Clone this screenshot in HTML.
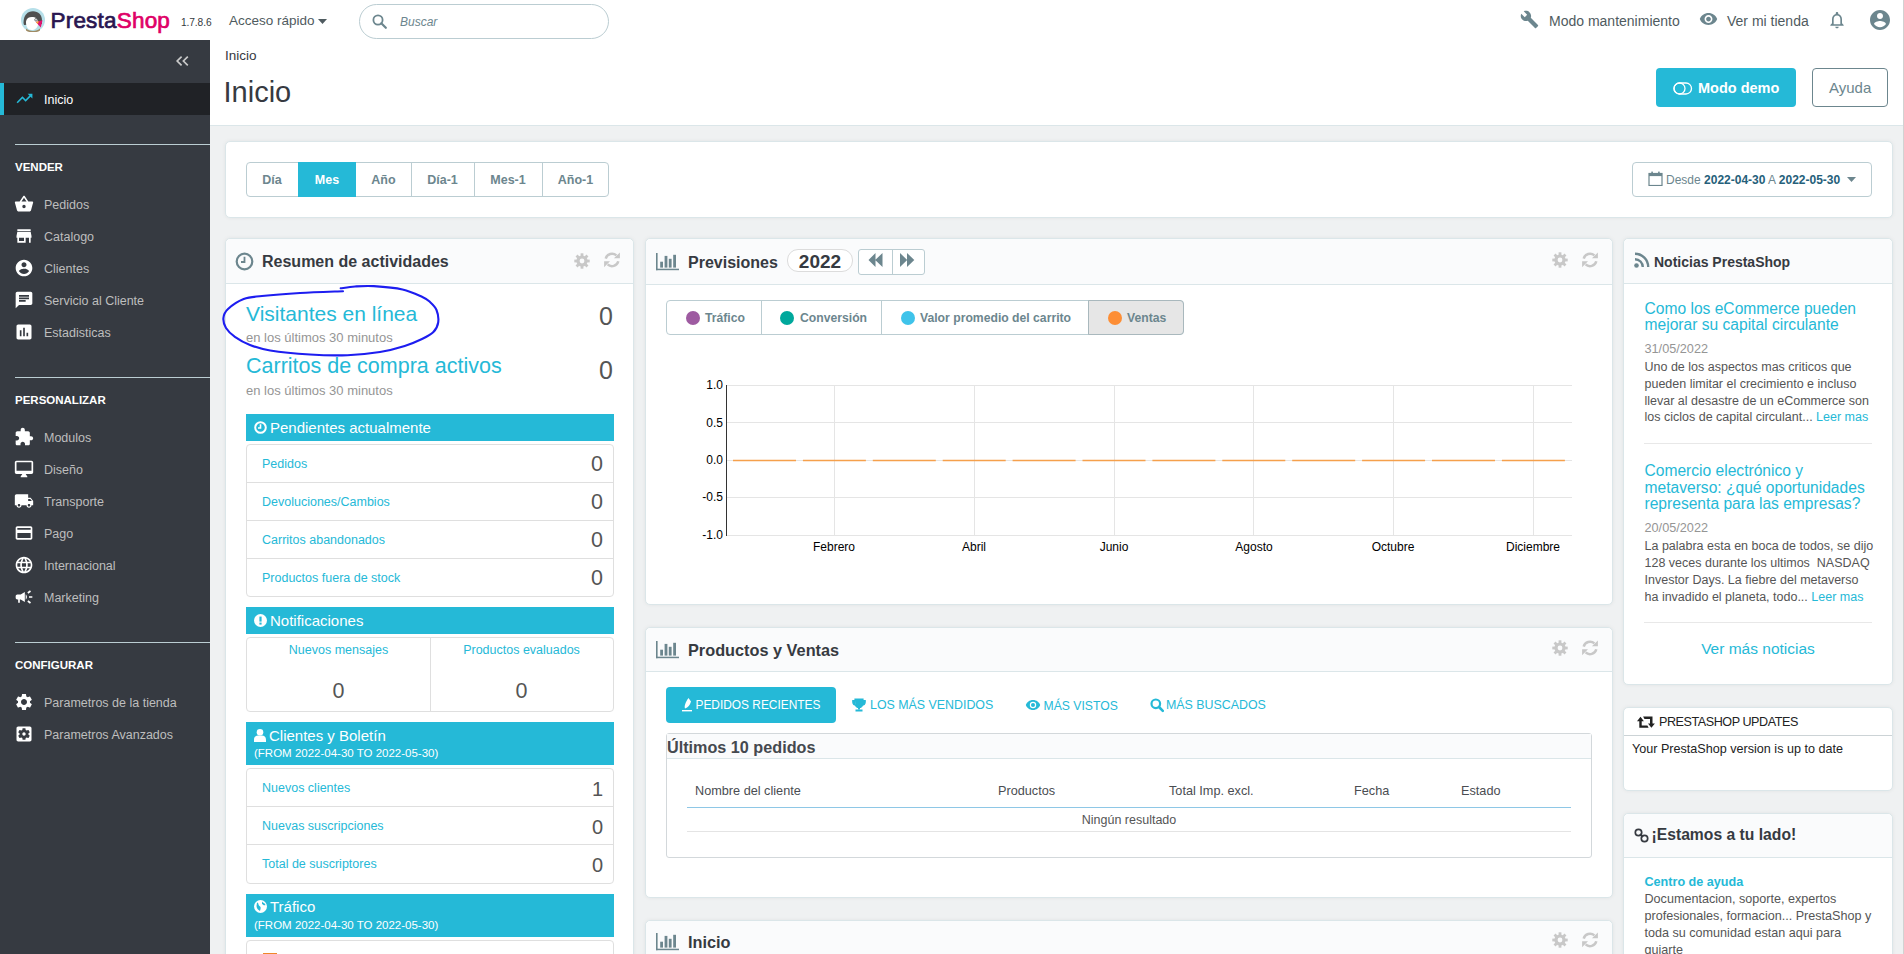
<!DOCTYPE html>
<html><head><meta charset="utf-8">
<style>
*{box-sizing:border-box;margin:0;padding:0}
html,body{width:1904px;height:954px;overflow:hidden;background:#eff1f2;font-family:"Liberation Sans",sans-serif;color:#363a41;position:relative}
.abs{position:absolute}
.t{position:absolute;white-space:nowrap;line-height:1}
svg{display:block}
/* header */
#hdr{position:absolute;left:0;top:0;width:1904px;height:40px;background:#fff}
/* sidebar */
#side{position:absolute;left:0;top:40px;width:210px;height:914px;background:#363a41}
.sep{position:absolute;left:15px;width:195px;height:1px;background:#bbcdd2}
.stitle{position:absolute;left:15px;margin-top:1px;color:#fff;font-weight:bold;font-size:11.5px;line-height:1}
.sitem{position:absolute;left:44px;margin-top:1px;color:#bebebe;font-size:12.5px;line-height:1;white-space:nowrap}
.sico{position:absolute;left:15px;width:19px;height:19px}
/* page header */
#phdr{position:absolute;left:210px;top:40px;width:1694px;height:86px;background:#fff;border-bottom:1px solid #dbe6e9}
.panel{position:absolute;background:#fff;border:1px solid #dbe6e9;border-radius:5px;box-shadow:0 0 4px 0 rgba(0,0,0,.06)}
.ph{position:absolute;left:0;top:0;right:0;background:#fafbfc;border-bottom:1px solid #dbe6e9;border-radius:5px 5px 0 0}
.blue{color:#25b9d7}
.bar{position:absolute;background:#25b9d7;color:#fff}
.lst{position:absolute;border:1px solid #dfdfdf;border-radius:4px;background:#fff}
.row{position:absolute;left:0;right:0;height:1px;background:#dfdfdf}
</style></head><body>

<div id="hdr">
 <svg class="abs" style="left:21px;top:8px" width="24" height="24" viewBox="0 0 24 24">
  <circle cx="12" cy="12" r="12" fill="#b6dfe9"/>
  <path d="M2.5 15 C2.5 7 6.5 3.2 12 3.2 C17.5 3.2 21 7 21 12.5 L21 16 L3 17Z" fill="#505050"/>
  <path d="M5 13.5 C5.5 10 8.5 8.6 12 9 C16 9.5 17.5 12.5 17 16.5 C16.5 20 14 22 10.5 22 C7 22 4.8 19 5 13.5Z" fill="#fff"/>
  <circle cx="15" cy="11.8" r="1.3" fill="#fff" stroke="#444" stroke-width=".7"/>
  <path d="M14.8 14 L21.5 12.2 L19.8 19.5 Z" fill="#e3126f"/>
  <path d="M14.8 14 L18 13.2 L16.8 15.8Z" fill="#f7b733"/>
  <path d="M5 20.5 C8 23.8 16 23.8 19 20.5 L19 22.5 C15.5 25 8.5 25 5 22.5Z" fill="#a08b64"/>
 </svg>
 <div class="t" style="left:50.5px;top:9.5px;font-size:22.5px;letter-spacing:0.2px;color:#2a1650;-webkit-text-stroke:0.7px #2a1650">Presta<span style="color:#df0067;-webkit-text-stroke:0.7px #df0067">Shop</span></div>
 <div class="t" style="left:181px;top:17.7px;font-size:10.2px;color:#363a41;letter-spacing:-0.1px">1.7.8.6</div>
 <div class="t" style="left:229px;top:14px;font-size:13.5px;color:#4f5b60">Acceso rápido</div>
 <svg class="abs" style="left:318px;top:19px" width="9" height="5" viewBox="0 0 9 5"><path d="M0 0H9L4.5 5Z" fill="#4f5b60"/></svg>
 <div class="abs" style="left:359px;top:4px;width:250px;height:35px;border:1px solid #bbcdd2;border-radius:18px"></div>
 <svg class="abs" style="left:372px;top:14px" width="15" height="15" viewBox="0 0 15 15"><circle cx="6" cy="6" r="4.6" fill="none" stroke="#6c868e" stroke-width="1.8"/><path d="M9.3 9.3L13.8 13.8" stroke="#6c868e" stroke-width="2.2" stroke-linecap="round"/></svg>
 <div class="t" style="left:400px;top:15.7px;font-size:12px;font-style:italic;color:#6c868e">Buscar</div>
 <svg class="abs" style="left:1520px;top:10px" width="19" height="19" viewBox="0 0 24 24"><path fill="#6c868e" d="M22.7 19l-9.1-9.1c.9-2.3.4-5-1.5-6.9-2-2-5-2.4-7.4-1.3L9 6 6 9 1.6 4.7C.4 7.1.9 10.1 2.9 12.1c1.9 1.9 4.6 2.4 6.9 1.5l9.1 9.1c.4.4 1 .4 1.4 0l2.3-2.3c.5-.4.5-1.1.1-1.4z"/></svg>
 <div class="t" style="left:1549px;top:14px;font-size:14px;color:#4f5b60">Modo mantenimiento</div>
 <svg class="abs" style="left:1699px;top:11px" width="19" height="16" viewBox="0 0 24 20"><path fill="#6c868e" d="M12 2.5C7 2.5 2.7 5.6 1 10c1.7 4.4 6 7.5 11 7.5s9.3-3.1 11-7.5c-1.7-4.4-6-7.5-11-7.5zM12 15c-2.8 0-5-2.2-5-5s2.2-5 5-5 5 2.2 5 5-2.2 5-5 5zm0-8c-1.7 0-3 1.3-3 3s1.3 3 3 3 3-1.3 3-3-1.3-3-3-3z"/></svg>
 <div class="t" style="left:1727px;top:14px;font-size:14px;color:#4f5b60">Ver mi tienda</div>
 <svg class="abs" style="left:1827px;top:10px" width="20" height="20" viewBox="0 0 24 24"><path fill="#6c868e" d="M12 22c1.1 0 2-.9 2-2h-4c0 1.1.9 2 2 2zm6-6v-5c0-3.1-1.6-5.6-4.5-6.3V4c0-.8-.7-1.5-1.5-1.5s-1.5.7-1.5 1.5v.7C7.6 5.4 6 7.9 6 11v5l-2 2v1h16v-1l-2-2zm-2 1H8v-6c0-2.5 1.5-4.5 4-4.5s4 2 4 4.5v6z"/></svg>
 <svg class="abs" style="left:1868px;top:8px" width="24" height="24" viewBox="0 0 24 24"><path fill="#6c868e" d="M12 2C6.5 2 2 6.5 2 12s4.5 10 10 10 10-4.5 10-10S17.5 2 12 2zm0 3c1.7 0 3 1.3 3 3s-1.3 3-3 3-3-1.3-3-3 1.3-3 3-3zm0 14.2c-2.5 0-4.7-1.3-6-3.2 0-2 4-3.1 6-3.1s6 1.1 6 3.1c-1.3 1.9-3.5 3.2-6 3.2z"/></svg>
</div>
<div id="side"></div>
<svg class="abs" style="left:176px;top:56px" width="13" height="10" viewBox="0 0 13 10"><path d="M5.6 0.7L1.2 5l4.4 4.3M11.8 0.7L7.4 5l4.4 4.3" fill="none" stroke="#c9c9c9" stroke-width="1.7"/></svg>
<div class="abs" style="left:0;top:83px;width:210px;height:32px;background:#202226"></div><div class="abs" style="left:0;top:83px;width:4px;height:32px;background:#25b9d7"></div>
<svg class="abs" style="left:15px;top:89px" width="19" height="19" viewBox="0 0 24 24"><path fill="#25b9d7" d="M16 6l2.29 2.29-4.88 4.88-4-4L2 16.59 3.41 18l6-6 4 4 6.3-6.29L22 12V6z"/></svg>
<div class="sitem" style="top:92.5px;color:#fff">Inicio</div>
<div class="sep" style="top:144px"></div>
<div class="sep" style="top:377px"></div>
<div class="sep" style="top:642px"></div>
<div class="stitle" style="top:161px">VENDER</div>
<div class="stitle" style="top:394px">PERSONALIZAR</div>
<div class="stitle" style="top:659px">CONFIGURAR</div>
<svg class="abs" style="left:14px;top:194px" width="20" height="20" viewBox="0 0 24 24"><path fill="#fff" d="M17.21 9l-4.38-6.56c-.19-.28-.51-.42-.83-.42-.32 0-.64.14-.83.43L6.79 9H2c-.55 0-1 .45-1 1 0 .09.01.18.04.27l2.54 9.27c.23.84 1 1.46 1.92 1.46h13c.92 0 1.69-.62 1.93-1.46l2.54-9.27L23 10c0-.55-.45-1-1-1h-4.79zM9 9l3-4.4L15 9H9zm3 8c-1.1 0-2-.9-2-2s.9-2 2-2 2 .9 2 2-.9 2-2 2z"/></svg>
<div class="sitem" style="top:197.5px">Pedidos</div>
<svg class="abs" style="left:14px;top:226px" width="20" height="20" viewBox="0 0 24 24"><path fill="#fff" d="M20 4H4v2h16V4zm1 10v-2l-1-5H4l-1 5v2h1v6h10v-6h4v6h2v-6h1zm-9 4H6v-4h6v4z"/></svg>
<div class="sitem" style="top:229.5px">Catalogo</div>
<svg class="abs" style="left:14px;top:258px" width="20" height="20" viewBox="0 0 24 24"><path fill="#fff" d="M12 2C6.48 2 2 6.48 2 12s4.48 10 10 10 10-4.48 10-10S17.52 2 12 2zm0 3c1.66 0 3 1.34 3 3s-1.34 3-3 3-3-1.34-3-3 1.34-3 3-3zm0 14.2c-2.5 0-4.71-1.28-6-3.22.03-1.99 4-3.08 6-3.08 1.99 0 5.97 1.09 6 3.08-1.29 1.94-3.5 3.22-6 3.22z"/></svg>
<div class="sitem" style="top:261.5px">Clientes</div>
<svg class="abs" style="left:14px;top:290px" width="20" height="20" viewBox="0 0 24 24"><path fill="#fff" d="M20 2H4c-1.1 0-1.99.9-1.99 2L2 22l4-4h14c1.1 0 2-.9 2-2V4c0-1.1-.9-2-2-2zM6 9h12v2H6V9zm8 5H6v-2h8v2zm4-6H6V6h12v2z"/></svg>
<div class="sitem" style="top:293.5px">Servicio al Cliente</div>
<svg class="abs" style="left:14px;top:322px" width="20" height="20" viewBox="0 0 24 24"><path fill="#fff" d="M19 3H5c-1.1 0-2 .9-2 2v14c0 1.1.9 2 2 2h14c1.1 0 2-.9 2-2V5c0-1.1-.9-2-2-2zM9 17H7v-7h2v7zm4 0h-2V7h2v10zm4 0h-2v-4h2v4z"/></svg>
<div class="sitem" style="top:325.5px">Estadisticas</div>
<svg class="abs" style="left:14px;top:427px" width="20" height="20" viewBox="0 0 24 24"><path fill="#fff" d="M20.5 11H19V7c0-1.1-.9-2-2-2h-4V3.5C13 2.12 11.88 1 10.5 1S8 2.12 8 3.5V5H4c-1.1 0-1.99.9-1.99 2v3.8H3.5c1.49 0 2.7 1.21 2.7 2.7s-1.21 2.7-2.7 2.7H2V20c0 1.1.9 2 2 2h3.8v-1.5c0-1.49 1.21-2.7 2.7-2.7 1.49 0 2.7 1.21 2.7 2.7V22H17c1.1 0 2-.9 2-2v-4h1.5c1.38 0 2.5-1.12 2.5-2.5S21.88 11 20.5 11z"/></svg>
<div class="sitem" style="top:430.5px">Modulos</div>
<svg class="abs" style="left:14px;top:459px" width="20" height="20" viewBox="0 0 24 24"><path fill="#fff" d="M21 2H3c-1.1 0-2 .9-2 2v12c0 1.1.9 2 2 2h7l-2 3v1h8v-1l-2-3h7c1.1 0 2-.9 2-2V4c0-1.1-.9-2-2-2zm0 12H3V4h18v10z"/></svg>
<div class="sitem" style="top:462.5px">Diseño</div>
<svg class="abs" style="left:14px;top:491px" width="20" height="20" viewBox="0 0 24 24"><path fill="#fff" d="M20 8h-3V4H3c-1.1 0-2 .9-2 2v11h2c0 1.66 1.34 3 3 3s3-1.34 3-3h6c0 1.66 1.34 3 3 3s3-1.34 3-3h2v-5l-3-4zM6 18.5c-.83 0-1.5-.67-1.5-1.5s.67-1.5 1.5-1.5 1.5.67 1.5 1.5-.67 1.5-1.5 1.5zm13.5-9l1.96 2.5H17V9.5h2.5zm-1.5 9c-.83 0-1.5-.67-1.5-1.5s.67-1.5 1.5-1.5 1.5.67 1.5 1.5-.67 1.5-1.5 1.5z"/></svg>
<div class="sitem" style="top:494.5px">Transporte</div>
<svg class="abs" style="left:14px;top:523px" width="20" height="20" viewBox="0 0 24 24"><path fill="#fff" d="M20 4H4c-1.11 0-1.99.89-1.99 2L2 18c0 1.11.89 2 2 2h16c1.11 0 2-.89 2-2V6c0-1.11-.89-2-2-2zm0 14H4v-6h16v6zm0-10H4V6h16v2z"/></svg>
<div class="sitem" style="top:526.5px">Pago</div>
<svg class="abs" style="left:14px;top:555px" width="20" height="20" viewBox="0 0 24 24"><path fill="#fff" d="M11.99 2C6.47 2 2 6.48 2 12s4.47 10 9.99 10C17.52 22 22 17.52 22 12S17.52 2 11.99 2zm6.93 6h-2.95c-.32-1.25-.78-2.450-1.38-3.56 1.840.63 3.37 1.91 4.33 3.56zM12 4.04c.83 1.2 1.48 2.53 1.91 3.96h-3.82c.43-1.43 1.08-2.76 1.91-3.96zM4.26 14C4.1 13.36 4 12.69 4 12s.1-1.36.26-2h3.38c-.08.66-.14 1.32-.14 2 0 .68.06 1.34.14 2H4.26zm.82 2h2.95c.32 1.25.78 2.45 1.38 3.56-1.84-.63-3.37-1.9-4.33-3.56zm2.95-8H5.08c.96-1.66 2.49-2.93 4.33-3.56C8.81 5.55 8.35 6.75 8.03 8zM12 19.96c-.83-1.2-1.48-2.53-1.91-3.96h3.82c-.43 1.43-1.08 2.76-1.91 3.96zM14.34 14H9.66c-.09-.66-.16-1.32-.16-2 0-.68.07-1.35.16-2h4.68c.09.65.16 1.32.16 2 0 .68-.07 1.34-.16 2zm.25 5.56c.6-1.11 1.06-2.31 1.38-3.56h2.95c-.96 1.65-2.49 2.93-4.330 3.56zM16.36 14c.08-.66.14-1.32.14-2 0-.68-.06-1.34-.14-2h3.38c.16.64.26 1.31.26 2s-.1 1.36-.26 2h-3.38z"/></svg>
<div class="sitem" style="top:558.5px">Internacional</div>
<svg class="abs" style="left:14px;top:587px" width="20" height="20" viewBox="0 0 24 24"><path fill="#fff" d="M18 11v2h4v-2h-4zm-2 6.61c.96.71 2.21 1.65 3.2 2.39.4-.53.8-1.07 1.2-1.6-.99-.74-2.24-1.68-3.2-2.4-.4.54-.8 1.08-1.2 1.61zM20.4 5.6c-.4-.53-.8-1.070-1.2-1.6-.99.74-2.24 1.68-3.2 2.4.4.53.8 1.07 1.2 1.6.96-.72 2.21-1.65 3.2-2.4zM4 9c-1.1 0-2 .9-2 2v2c0 1.1.9 2 2 2h1v4h2v-4h1l5 3V6L8 9H4zm11.5 3c0-1.33-.58-2.53-1.5-3.35v6.69c.92-.81 1.5-2.01 1.5-3.34z"/></svg>
<div class="sitem" style="top:590.5px">Marketing</div>
<svg class="abs" style="left:14px;top:692px" width="20" height="20" viewBox="0 0 24 24"><path fill="#fff" d="M19.14 12.94c.04-.3.06-.61.06-.94 0-.32-.02-.64-.07-.94l2.03-1.58c.18-.14.23-.41.12-.61l-1.92-3.32c-.12-.22-.37-.29-.59-.22l-2.39.96c-.5-.38-1.03-.7-1.62-.94l-.36-2.54c-.04-.24-.24-.41-.48-.41h-3.84c-.24 0-.43.17-.47.41l-.36 2.54c-.59.24-1.13.57-1.62.94l-2.39-.96c-.22-.08-.47 0-.59.22L2.74 8.87c-.12.21-.08.47.12.61l2.03 1.58c-.05.3-.09.63-.09.94s.02.64.07.94l-2.030 1.58c-.18.14-.23.41-.12.61l1.92 3.32c.12.22.37.29.59.22l2.39-.96c.5.38 1.03.7 1.62.94l.36 2.54c.05.24.24.41.48.41h3.840c.24 0 .44-.17.47-.41l.36-2.54c.59-.24 1.13-.56 1.62-.94l2.39.96c.22.08.47 0 .59-.22l1.92-3.32c.12-.22.07-.47-.12-.61l-2.01-1.58zM12 15.6c-1.98 0-3.6-1.62-3.6-3.6s1.62-3.6 3.6-3.6 3.6 1.62 3.6 3.6-1.62 3.6-3.6 3.6z"/></svg>
<div class="sitem" style="top:695.5px">Parametros de la tienda</div>
<svg class="abs" style="left:14px;top:724px" width="20" height="20" viewBox="0 0 24 24"><path fill="#fff" d="M12 10c-1.1 0-2 .9-2 2s.9 2 2 2 2-.9 2-2-.9-2-2-2zm7-7H5c-1.11 0-2 .9-2 2v14c0 1.1.89 2 2 2h14c1.11 0 2-.9 2-2V5c0-1.1-.89-2-2-2zm-1.75 9c0 .23-.02.46-.05.68l1.48 1.16c.13.11.17.3.08.45l-1.4 2.42c-.09.15-.27.21-.43.15l-1.74-.7c-.36.28-.76.51-1.18.69l-.26 1.85c-.03.17-.18.3-.35.3h-2.8c-.17 0-.32-.13-.35-.29l-.26-1.85c-.43-.18-.82-.41-1.18-.69l-1.74.7c-.16.06-.34 0-.43-.15l-1.4-2.42c-.09-.15-.05-.34.08-.45l1.48-1.16c-.03-.23-.05-.46-.05-.69 0-.23.02-.46.05-.68l-1.48-1.16c-.13-.11-.17-.3-.08-.45l1.4-2.42c.09-.15.27-.21.43-.15l1.74.7c.36-.28.76-.51 1.18-.69l.26-1.85c.03-.17.18-.3.35-.3h2.8c.17 0 .32.13.35.29l.26 1.85c.43.18.82.41 1.18.69l1.74-.7c.16-.06.34 0 .43.15l1.4 2.42c.09.15.05.34-.08.45l-1.48 1.16c.03.23.05.46.05.69z"/></svg>
<div class="sitem" style="top:727.5px">Parametros Avanzados</div>
<div id="phdr"></div>
<div class="t" style="left:225px;top:48.5px;font-size:13.5px;color:#363a41">Inicio</div>
<div class="t" style="left:223.5px;top:77.5px;font-size:29px;color:#363a41">Inicio</div>
<div class="abs" style="left:1656px;top:68px;width:140px;height:39px;background:#25b9d7;border-radius:4px"></div>
<svg class="abs" style="left:1673px;top:82px" width="20" height="13" viewBox="0 0 20 13"><rect x="1" y="1" width="17.5" height="11" rx="5.5" fill="none" stroke="#fff" stroke-width="1.3"/><circle cx="6.5" cy="6.5" r="5.5" fill="none" stroke="#fff" stroke-width="1.3"/></svg>
<div class="t" style="left:1698px;top:81px;font-size:14.5px;font-weight:bold;color:#fff">Modo demo</div>
<div class="abs" style="left:1812px;top:68px;width:76px;height:39px;border:1px solid #6c868e;border-radius:4px"></div>
<div class="t" style="left:1829px;top:80px;font-size:15px;color:#6c868e">Ayuda</div>

<div class="panel" style="left:225px;top:141px;width:1668px;height:77px"></div>
<div class="abs" style="left:246px;top:162px;width:363px;height:35px;border:1px solid #bbcdd2;border-radius:4px;background:#fff"></div>
<div class="abs" style="left:298px;top:162px;width:58px;height:35px;background:#25b9d7"></div>
<div class="abs" style="left:411px;top:163px;width:1px;height:33px;background:#bbcdd2"></div>
<div class="abs" style="left:474px;top:163px;width:1px;height:33px;background:#bbcdd2"></div>
<div class="abs" style="left:542px;top:163px;width:1px;height:33px;background:#bbcdd2"></div>
<div class="t" style="left:246px;top:173.5px;width:52px;text-align:center;font-size:12.5px;font-weight:bold;color:#6c868e">Día</div>
<div class="t" style="left:298px;top:173.5px;width:58px;text-align:center;font-size:12.5px;font-weight:bold;color:#fff">Mes</div>
<div class="t" style="left:356px;top:173.5px;width:55px;text-align:center;font-size:12.5px;font-weight:bold;color:#6c868e">Año</div>
<div class="t" style="left:411px;top:173.5px;width:63px;text-align:center;font-size:12.5px;font-weight:bold;color:#6c868e">Día-1</div>
<div class="t" style="left:474px;top:173.5px;width:68px;text-align:center;font-size:12.5px;font-weight:bold;color:#6c868e">Mes-1</div>
<div class="t" style="left:542px;top:173.5px;width:67px;text-align:center;font-size:12.5px;font-weight:bold;color:#6c868e">Año-1</div>

<div class="abs" style="left:1632px;top:162px;width:240px;height:35px;border:1px solid #bbcdd2;border-radius:4px;background:#fff"></div>
<svg class="abs" style="left:1648px;top:171px" width="15" height="15" viewBox="0 0 15 15"><rect x="1" y="2.5" width="13" height="12" fill="none" stroke="#6c868e" stroke-width="1.2"/><rect x="1" y="2.5" width="13" height="2.6" fill="#6c868e"/><rect x="3.3" y="0.6" width="1.6" height="3" fill="#6c868e"/><rect x="10.1" y="0.6" width="1.6" height="3" fill="#6c868e"/></svg>
<div class="t" style="left:1666px;top:174px;font-size:12px;color:#6c868e">Desde <b style="color:#25607a">2022-04-30</b> A <b style="color:#25607a">2022-05-30</b></div>
<svg class="abs" style="left:1847px;top:177px" width="9" height="5" viewBox="0 0 9 5"><path d="M0 0H9L4.5 5Z" fill="#6c868e"/></svg>


<div class="panel" style="left:225px;top:238px;width:409px;height:740px"><div class="ph" style="height:45px"></div></div>
<svg class="abs" style="left:235px;top:252px" width="19" height="19" viewBox="0 0 19 19"><circle cx="9.5" cy="9.5" r="7.8" fill="none" stroke="#6c868e" stroke-width="2.2"/><path d="M9.5 4.8V10H6" fill="none" stroke="#6c868e" stroke-width="1.8"/></svg>
<div class="t" style="left:262px;top:254.4px;font-size:16px;font-weight:bold;color:#363a41;">Resumen de actividades</div>
<svg class="abs" style="left:574px;top:253px" width="16" height="16" viewBox="0 0 16 16"><circle cx="8" cy="8" r="5.6" fill="#c8c8c8"/><rect x="6.6" y="0.3" width="2.8" height="3" fill="#c8c8c8" transform="rotate(0 8 8)"/><rect x="6.6" y="0.3" width="2.8" height="3" fill="#c8c8c8" transform="rotate(45 8 8)"/><rect x="6.6" y="0.3" width="2.8" height="3" fill="#c8c8c8" transform="rotate(90 8 8)"/><rect x="6.6" y="0.3" width="2.8" height="3" fill="#c8c8c8" transform="rotate(135 8 8)"/><rect x="6.6" y="0.3" width="2.8" height="3" fill="#c8c8c8" transform="rotate(180 8 8)"/><rect x="6.6" y="0.3" width="2.8" height="3" fill="#c8c8c8" transform="rotate(225 8 8)"/><rect x="6.6" y="0.3" width="2.8" height="3" fill="#c8c8c8" transform="rotate(270 8 8)"/><rect x="6.6" y="0.3" width="2.8" height="3" fill="#c8c8c8" transform="rotate(315 8 8)"/><circle cx="8" cy="8" r="2.4" fill="#fafbfc"/></svg>
<svg class="abs" style="left:604px;top:252px" width="16" height="16" viewBox="0 0 16 16"><path d="M1.7 6.6A6.5 6.5 0 0 1 12.4 3.4M14.3 9.2A6.5 6.5 0 0 1 3.6 12.4" fill="none" stroke="#c8c8c8" stroke-width="2.5"/><path d="M15.9 0.5V6.2H9.9ZM0.1 9.3H6L0.1 15.3Z" fill="#c8c8c8"/></svg>
<div class="t" style="left:246px;top:303.2px;font-size:21px;color:#25b9d7;">Visitantes en línea</div>
<div class="t" style="left:246px;top:331.3px;font-size:13px;color:#959595;">en los últimos 30 minutos</div>
<div class="t" style="left:413px;width:200px;text-align:right;top:304.3px;font-size:25px;color:#555">0</div>
<div class="t" style="left:246px;top:356.3px;font-size:21.5px;color:#25b9d7;">Carritos de compra activos</div>
<div class="t" style="left:246px;top:383.7px;font-size:13px;color:#959595;">en los últimos 30 minutos</div>
<div class="t" style="left:413px;width:200px;text-align:right;top:357.8px;font-size:25px;color:#555">0</div>
<div class="bar" style="left:246px;top:414px;width:368px;height:27px"></div>
<svg class="abs" style="left:254px;top:421px" width="13" height="13" viewBox="0 0 13 13"><circle cx="6.5" cy="6.5" r="5.3" fill="none" stroke="#fff" stroke-width="2"/><path d="M6.5 3.3V7H4" fill="none" stroke="#fff" stroke-width="1.6"/></svg>
<div class="t" style="left:270px;top:420.2px;font-size:15px;color:#fff;">Pendientes actualmente</div>
<div class="lst" style="left:246px;top:444px;width:368px;height:153px"><div class="row" style="top:37px"></div><div class="row" style="top:75px"></div><div class="row" style="top:113px"></div></div>
<div class="t" style="left:262px;top:458.4px;font-size:12.5px;color:#25b9d7;">Pedidos</div>
<div class="t" style="left:403px;width:200px;text-align:right;top:454.1px;font-size:21.5px;color:#555">0</div>
<div class="t" style="left:262px;top:496.4px;font-size:12.5px;color:#25b9d7;">Devoluciones/Cambios</div>
<div class="t" style="left:403px;width:200px;text-align:right;top:492.1px;font-size:21.5px;color:#555">0</div>
<div class="t" style="left:262px;top:534.4px;font-size:12.5px;color:#25b9d7;">Carritos abandonados</div>
<div class="t" style="left:403px;width:200px;text-align:right;top:530.1px;font-size:21.5px;color:#555">0</div>
<div class="t" style="left:262px;top:572.4px;font-size:12.5px;color:#25b9d7;">Productos fuera de stock</div>
<div class="t" style="left:403px;width:200px;text-align:right;top:568.1px;font-size:21.5px;color:#555">0</div>
<div class="bar" style="left:246px;top:607px;width:368px;height:27px"></div>
<svg class="abs" style="left:254px;top:614px" width="13" height="13" viewBox="0 0 13 13"><circle cx="6.5" cy="6.5" r="6.5" fill="#fff"/><rect x="5.4" y="2.6" width="2.2" height="5" fill="#25b9d7"/><rect x="5.4" y="8.6" width="2.2" height="2" fill="#25b9d7"/></svg>
<div class="t" style="left:270px;top:613.2px;font-size:15px;color:#fff;">Notificaciones</div>
<div class="lst" style="left:246px;top:637px;width:368px;height:75px"><div class="abs" style="left:183px;top:0;width:1px;height:73px;background:#dfdfdf"></div></div>
<div class="t" style="left:247px;width:183px;text-align:center;top:643.5px;font-size:12.5px;color:#25b9d7">Nuevos mensajes</div>
<div class="t" style="left:430px;width:183px;text-align:center;top:643.5px;font-size:12.5px;color:#25b9d7">Productos evaluados</div>
<div class="t" style="left:247px;width:183px;text-align:center;top:680.5px;font-size:21.5px;color:#555">0</div>
<div class="t" style="left:430px;width:183px;text-align:center;top:680.5px;font-size:21.5px;color:#555">0</div>
<div class="bar" style="left:246px;top:722px;width:368px;height:43px"></div>
<svg class="abs" style="left:254px;top:729px" width="12" height="13" viewBox="0 0 12 13"><circle cx="6" cy="3.3" r="3.3" fill="#fff"/><path d="M0 13V10.5C0 8 2 6.6 4 6.6H8C10 6.6 12 8 12 10.5V13Z" fill="#fff"/></svg>
<div class="t" style="left:269px;top:728.3px;font-size:15px;color:#fff;">Clientes y Boletín</div>
<div class="t" style="left:254px;top:748.2px;font-size:11.5px;color:#fff;">(FROM 2022-04-30 TO 2022-05-30)</div>
<div class="lst" style="left:246px;top:768px;width:368px;height:116px"><div class="row" style="top:37px"></div><div class="row" style="top:75px"></div></div>
<div class="t" style="left:262px;top:782.4px;font-size:12.5px;color:#25b9d7;">Nuevos clientes</div>
<div class="t" style="left:403px;width:200px;text-align:right;top:778.6px;font-size:20px;color:#555">1</div>
<div class="t" style="left:262px;top:820.4px;font-size:12.5px;color:#25b9d7;">Nuevas suscripciones</div>
<div class="t" style="left:403px;width:200px;text-align:right;top:816.6px;font-size:20px;color:#555">0</div>
<div class="t" style="left:262px;top:858.4px;font-size:12.5px;color:#25b9d7;">Total de suscriptores</div>
<div class="t" style="left:403px;width:200px;text-align:right;top:854.6px;font-size:20px;color:#555">0</div>
<div class="bar" style="left:246px;top:894px;width:368px;height:43px"></div>
<svg class="abs" style="left:254px;top:900px" width="13" height="13" viewBox="0 0 13 13"><circle cx="6.5" cy="6.5" r="6.5" fill="#fff"/><path d="M3 2.5C5 3 4 5 5.5 6S7 8 6 11C4 10 2.5 8 2.5 6ZM8 1.5C9 3 11 3 11.5 5 10 6 9 4.5 8 4Z" fill="#25b9d7"/></svg>
<div class="t" style="left:270px;top:899.3px;font-size:15px;color:#fff;">Tráfico</div>
<div class="t" style="left:254px;top:919.7px;font-size:11.5px;color:#fff;">(FROM 2022-04-30 TO 2022-05-30)</div>
<div class="lst" style="left:246px;top:940px;width:368px;height:60px"></div>
<div class="abs" style="left:263px;top:953px;width:14px;height:3px;background:#f0862a"></div>
<svg class="abs" style="left:0;top:0" width="640" height="400" viewBox="0 0 640 400"><path d="M343 291.2 C335.8 291.5 313.5 292.2 300 293 C286.5 293.8 271.4 295.0 262 296 C252.6 297.0 249.4 296.8 243.7 299 C238.0 301.2 231.4 305.8 228 309 C224.6 312.2 223.7 314.8 223.4 318 C223.1 321.2 224.1 324.9 226 328 C227.9 331.1 230.9 334.0 234.9 336.8 C238.9 339.6 244.1 342.7 250 345 C255.9 347.3 260.2 348.9 270.2 350.5 C280.2 352.1 297.1 353.7 310 354.5 C322.9 355.3 335.7 355.6 347.4 355.2 C359.1 354.8 370.4 353.5 380 352 C389.6 350.5 397.7 348.2 404.7 346 C411.7 343.8 417.2 341.3 422 339 C426.8 336.7 430.7 334.8 433.4 332 C436.1 329.2 437.7 326.2 438.2 322.5 C438.7 318.8 437.9 313.4 436.5 310 C435.1 306.6 432.4 304.2 430 302 C427.6 299.8 427.0 299.1 422.4 297 C417.8 294.9 410.6 291.2 402.5 289.4 C394.4 287.6 381.7 286.6 373.8 286.1 C365.9 285.6 360.5 286.1 355 286.5 C349.5 286.9 343.1 288.0 340.7 288.3" fill="none" stroke="#1d1df0" stroke-width="2.1" stroke-linecap="round"/></svg>
<div class="panel" style="left:645px;top:238px;width:968px;height:367px"><div class="ph" style="height:46px"></div></div>
<svg class="abs" style="left:656px;top:253px" width="23" height="18" viewBox="0 0 23 18"><rect x="0" y="0" width="1.6" height="17.2" fill="#6c868e"/><rect x="0" y="15.7" width="23" height="1.5" fill="#6c868e"/><rect x="4.2" y="8.7" width="2.8" height="5.9" fill="#6c868e"/><rect x="8.6" y="2.9" width="2.8" height="11.7" fill="#6c868e"/><rect x="12.8" y="5.8" width="2.8" height="8.8" fill="#6c868e"/><rect x="17.2" y="1.8" width="2.8" height="12.8" fill="#6c868e"/></svg>
<div class="t" style="left:688px;top:254.6px;font-size:16px;font-weight:bold;color:#363a41;">Previsiones</div>
<div class="abs" style="left:787px;top:249px;width:66px;height:23px;border:1px solid #dcdcdc;border-radius:11px;background:#fff"></div>
<div class="t" style="left:720px;width:200px;text-align:center;top:252px;font-size:19px;font-weight:bold;color:#363a41">2022</div>
<div class="abs" style="left:858px;top:249px;width:67px;height:26px;border:1px solid #bbcdd2;border-radius:3px;background:#fff"><div class="abs" style="left:33px;top:0;width:1px;height:24px;background:#bbcdd2"></div></div>
<svg class="abs" style="left:868px;top:253px" width="15" height="14" viewBox="0 0 15 14"><path d="M0.5 7L7.5 0V14ZM7.2 7L14.5 0V14Z" fill="#6c868e"/></svg>
<svg class="abs" style="left:900px;top:253px" width="15" height="14" viewBox="0 0 15 14"><path d="M0 0L7.2 7 0 14ZM7 0L14.3 7 7 14Z" fill="#6c868e"/></svg>
<svg class="abs" style="left:1552px;top:252px" width="16" height="16" viewBox="0 0 16 16"><circle cx="8" cy="8" r="5.6" fill="#c8c8c8"/><rect x="6.6" y="0.3" width="2.8" height="3" fill="#c8c8c8" transform="rotate(0 8 8)"/><rect x="6.6" y="0.3" width="2.8" height="3" fill="#c8c8c8" transform="rotate(45 8 8)"/><rect x="6.6" y="0.3" width="2.8" height="3" fill="#c8c8c8" transform="rotate(90 8 8)"/><rect x="6.6" y="0.3" width="2.8" height="3" fill="#c8c8c8" transform="rotate(135 8 8)"/><rect x="6.6" y="0.3" width="2.8" height="3" fill="#c8c8c8" transform="rotate(180 8 8)"/><rect x="6.6" y="0.3" width="2.8" height="3" fill="#c8c8c8" transform="rotate(225 8 8)"/><rect x="6.6" y="0.3" width="2.8" height="3" fill="#c8c8c8" transform="rotate(270 8 8)"/><rect x="6.6" y="0.3" width="2.8" height="3" fill="#c8c8c8" transform="rotate(315 8 8)"/><circle cx="8" cy="8" r="2.4" fill="#fafbfc"/></svg>
<svg class="abs" style="left:1582px;top:252px" width="16" height="16" viewBox="0 0 16 16"><path d="M1.7 6.6A6.5 6.5 0 0 1 12.4 3.4M14.3 9.2A6.5 6.5 0 0 1 3.6 12.4" fill="none" stroke="#c8c8c8" stroke-width="2.5"/><path d="M15.9 0.5V6.2H9.9ZM0.1 9.3H6L0.1 15.3Z" fill="#c8c8c8"/></svg>
<div class="abs" style="left:666px;top:300px;width:518px;height:35px;border:1px solid #bbcdd2;border-radius:4px;background:#fff;overflow:hidden"><div class="abs" style="left:421px;top:0;width:96px;height:33px;background:#e6e6e6;border-left:1px solid #a9b8bd"></div><div class="abs" style="left:94px;top:0;width:1px;height:33px;background:#bbcdd2"></div><div class="abs" style="left:214px;top:0;width:1px;height:33px;background:#bbcdd2"></div></div>
<div class="abs" style="left:1088px;top:300px;width:96px;height:35px;border:1px solid #a9b8bd;border-radius:0 4px 4px 0"></div>
<div class="abs" style="left:686px;top:310.5px;width:14px;height:14px;border-radius:7px;background:#9e5ba1"></div>
<div class="t" style="left:705px;top:311.5px;font-size:12.2px;font-weight:bold;color:#6c868e;">Tráfico</div>
<div class="abs" style="left:780px;top:310.5px;width:14px;height:14px;border-radius:7px;background:#00a89c"></div>
<div class="t" style="left:800px;top:311.5px;font-size:12.2px;font-weight:bold;color:#6c868e;">Conversión</div>
<div class="abs" style="left:901px;top:310.5px;width:14px;height:14px;border-radius:7px;background:#3fc3ea"></div>
<div class="t" style="left:920px;top:311.5px;font-size:12.2px;font-weight:bold;color:#6c868e;">Valor promedio del carrito</div>
<div class="abs" style="left:1107.5px;top:310.5px;width:14px;height:14px;border-radius:7px;background:#fd8e35"></div>
<div class="t" style="left:1127px;top:311.5px;font-size:12.2px;font-weight:bold;color:#6c868e;">Ventas</div>
<svg class="abs" style="left:640px;top:370px" width="960" height="200" viewBox="640 370 960 200"><line x1="727" y1="385.5" x2="1572" y2="385.5" stroke="#e5e5e5" stroke-width="1"/><line x1="727" y1="422.5" x2="1572" y2="422.5" stroke="#e5e5e5" stroke-width="1"/><line x1="727" y1="460.5" x2="1572" y2="460.5" stroke="#e5e5e5" stroke-width="1"/><line x1="727" y1="497.5" x2="1572" y2="497.5" stroke="#e5e5e5" stroke-width="1"/><line x1="727" y1="535.5" x2="1572" y2="535.5" stroke="#e5e5e5" stroke-width="1"/><line x1="834.5" y1="385" x2="834.5" y2="535" stroke="#e5e5e5" stroke-width="1"/><line x1="974.5" y1="385" x2="974.5" y2="535" stroke="#e5e5e5" stroke-width="1"/><line x1="1114.5" y1="385" x2="1114.5" y2="535" stroke="#e5e5e5" stroke-width="1"/><line x1="1253.5" y1="385" x2="1253.5" y2="535" stroke="#e5e5e5" stroke-width="1"/><line x1="1393.5" y1="385" x2="1393.5" y2="535" stroke="#e5e5e5" stroke-width="1"/><line x1="1533.5" y1="385" x2="1533.5" y2="535" stroke="#e5e5e5" stroke-width="1"/><line x1="726.5" y1="385" x2="726.5" y2="536" stroke="#333" stroke-width="1"/><line x1="733.0" y1="460.5" x2="796.0" y2="460.5" stroke="#f5a04c" stroke-width="1.3"/><line x1="802.9" y1="460.5" x2="865.9" y2="460.5" stroke="#f5a04c" stroke-width="1.3"/><line x1="872.8" y1="460.5" x2="935.8" y2="460.5" stroke="#f5a04c" stroke-width="1.3"/><line x1="942.7" y1="460.5" x2="1005.7" y2="460.5" stroke="#f5a04c" stroke-width="1.3"/><line x1="1012.6" y1="460.5" x2="1075.6" y2="460.5" stroke="#f5a04c" stroke-width="1.3"/><line x1="1082.5" y1="460.5" x2="1145.5" y2="460.5" stroke="#f5a04c" stroke-width="1.3"/><line x1="1152.4" y1="460.5" x2="1215.4" y2="460.5" stroke="#f5a04c" stroke-width="1.3"/><line x1="1222.3" y1="460.5" x2="1285.3" y2="460.5" stroke="#f5a04c" stroke-width="1.3"/><line x1="1292.2" y1="460.5" x2="1355.2" y2="460.5" stroke="#f5a04c" stroke-width="1.3"/><line x1="1362.1" y1="460.5" x2="1425.1" y2="460.5" stroke="#f5a04c" stroke-width="1.3"/><line x1="1432.0" y1="460.5" x2="1495.0" y2="460.5" stroke="#f5a04c" stroke-width="1.3"/><line x1="1501.9" y1="460.5" x2="1564.9" y2="460.5" stroke="#f5a04c" stroke-width="1.3"/></svg>
<div class="t" style="left:623px;width:100px;text-align:right;top:379.4px;font-size:12px;color:#000">1.0</div>
<div class="t" style="left:623px;width:100px;text-align:right;top:416.5px;font-size:12px;color:#000">0.5</div>
<div class="t" style="left:623px;width:100px;text-align:right;top:454.3px;font-size:12px;color:#000">0.0</div>
<div class="t" style="left:623px;width:100px;text-align:right;top:491.1px;font-size:12px;color:#000">-0.5</div>
<div class="t" style="left:623px;width:100px;text-align:right;top:529.4px;font-size:12px;color:#000">-1.0</div>
<div class="t" style="left:734px;width:200px;text-align:center;top:541.1px;font-size:12px;color:#000">Febrero</div>
<div class="t" style="left:874px;width:200px;text-align:center;top:541.1px;font-size:12px;color:#000">Abril</div>
<div class="t" style="left:1014px;width:200px;text-align:center;top:541.1px;font-size:12px;color:#000">Junio</div>
<div class="t" style="left:1154px;width:200px;text-align:center;top:541.1px;font-size:12px;color:#000">Agosto</div>
<div class="t" style="left:1293px;width:200px;text-align:center;top:541.1px;font-size:12px;color:#000">Octubre</div>
<div class="t" style="left:1433px;width:200px;text-align:center;top:541.1px;font-size:12px;color:#000">Diciembre</div>
<div class="panel" style="left:645px;top:627px;width:968px;height:271px"><div class="ph" style="height:44px"></div></div>
<svg class="abs" style="left:656px;top:641px" width="23" height="18" viewBox="0 0 23 18"><rect x="0" y="0" width="1.6" height="17.2" fill="#6c868e"/><rect x="0" y="15.7" width="23" height="1.5" fill="#6c868e"/><rect x="4.2" y="8.7" width="2.8" height="5.9" fill="#6c868e"/><rect x="8.6" y="2.9" width="2.8" height="11.7" fill="#6c868e"/><rect x="12.8" y="5.8" width="2.8" height="8.8" fill="#6c868e"/><rect x="17.2" y="1.8" width="2.8" height="12.8" fill="#6c868e"/></svg>
<div class="t" style="left:688px;top:641.8px;font-size:16.3px;font-weight:bold;color:#363a41;">Productos y Ventas</div>
<svg class="abs" style="left:1552px;top:640px" width="16" height="16" viewBox="0 0 16 16"><circle cx="8" cy="8" r="5.6" fill="#c8c8c8"/><rect x="6.6" y="0.3" width="2.8" height="3" fill="#c8c8c8" transform="rotate(0 8 8)"/><rect x="6.6" y="0.3" width="2.8" height="3" fill="#c8c8c8" transform="rotate(45 8 8)"/><rect x="6.6" y="0.3" width="2.8" height="3" fill="#c8c8c8" transform="rotate(90 8 8)"/><rect x="6.6" y="0.3" width="2.8" height="3" fill="#c8c8c8" transform="rotate(135 8 8)"/><rect x="6.6" y="0.3" width="2.8" height="3" fill="#c8c8c8" transform="rotate(180 8 8)"/><rect x="6.6" y="0.3" width="2.8" height="3" fill="#c8c8c8" transform="rotate(225 8 8)"/><rect x="6.6" y="0.3" width="2.8" height="3" fill="#c8c8c8" transform="rotate(270 8 8)"/><rect x="6.6" y="0.3" width="2.8" height="3" fill="#c8c8c8" transform="rotate(315 8 8)"/><circle cx="8" cy="8" r="2.4" fill="#fafbfc"/></svg>
<svg class="abs" style="left:1582px;top:640px" width="16" height="16" viewBox="0 0 16 16"><path d="M1.7 6.6A6.5 6.5 0 0 1 12.4 3.4M14.3 9.2A6.5 6.5 0 0 1 3.6 12.4" fill="none" stroke="#c8c8c8" stroke-width="2.5"/><path d="M15.9 0.5V6.2H9.9ZM0.1 9.3H6L0.1 15.3Z" fill="#c8c8c8"/></svg>
<div class="abs" style="left:666px;top:687px;width:170px;height:36px;background:#25b9d7;border-radius:4px"></div>
<svg class="abs" style="left:681px;top:697px" width="12" height="15" viewBox="0 0 12 15"><path d="M7.5 1L10 4.5C9 8 7 10.5 4 11.5 3 9.5 4.5 5 7.5 1Z" fill="#fff"/><rect x="1" y="13" width="10" height="1.4" fill="#fff"/></svg>
<div class="t" style="left:695.5px;top:699.7px;font-size:11.9px;color:#fff;">PEDIDOS RECIENTES</div>
<svg class="abs" style="left:852px;top:698px" width="14" height="14" viewBox="0 0 14 14"><path d="M3 1H11V5.5C11 8 9 9.5 7 9.5S3 8 3 5.5ZM3 2.5H0.8V4C0.8 6 2 7 3.5 7M11 2.5H13.2V4C13.2 6 12 7 10.5 7" fill="#25b9d7" stroke="#25b9d7" stroke-width="1.2"/><rect x="6" y="9" width="2" height="2.5" fill="#25b9d7"/><rect x="3.5" y="11.5" width="7" height="2" fill="#25b9d7"/></svg>
<div class="t" style="left:870px;top:699.4px;font-size:12.4px;color:#25b9d7;">LOS MÁS VENDIDOS</div>
<svg class="abs" style="left:1025px;top:699px" width="16" height="12" viewBox="0 0 16 12"><path d="M8 1C4.5 1 1.8 3.3 0.8 6 1.8 8.7 4.5 11 8 11S14.2 8.7 15.2 6C14.2 3.3 11.5 1 8 1Z" fill="#25b9d7"/><circle cx="8" cy="6" r="3.2" fill="#fff"/><circle cx="8" cy="6" r="2" fill="#25b9d7"/></svg>
<div class="t" style="left:1043.5px;top:699.5px;font-size:12.2px;color:#25b9d7;">MÁS VISTOS</div>
<svg class="abs" style="left:1150px;top:698px" width="14" height="15" viewBox="0 0 14 15"><circle cx="5.8" cy="5.8" r="4.3" fill="none" stroke="#25b9d7" stroke-width="2.2"/><path d="M9 9L12.8 12.8" stroke="#25b9d7" stroke-width="2.6" stroke-linecap="round"/></svg>
<div class="t" style="left:1166px;top:699.4px;font-size:12.4px;color:#25b9d7;">MÁS BUSCADOS</div>
<div class="abs" style="left:666px;top:733px;width:926px;height:125px;border:1px solid #d3d8db;border-radius:3px;background:#fff"><div class="abs" style="left:0;top:0;right:0;height:25px;background:#fafbfc;border-bottom:1px solid #dbe6e9"></div></div>
<div class="t" style="left:667px;top:738.6px;font-size:16.2px;font-weight:bold;color:#45494f;">Últimos 10 pedidos</div>
<div class="t" style="left:695px;top:785.1px;font-size:12.7px;color:#4a4d52;">Nombre del cliente</div>
<div class="t" style="left:998px;top:785.1px;font-size:12.7px;color:#4a4d52;">Productos</div>
<div class="t" style="left:1169px;top:785.1px;font-size:12.7px;color:#4a4d52;">Total Imp. excl.</div>
<div class="t" style="left:1354px;top:785.1px;font-size:12.7px;color:#4a4d52;">Fecha</div>
<div class="t" style="left:1461px;top:785.1px;font-size:12.7px;color:#4a4d52;">Estado</div>
<div class="abs" style="left:687px;top:807px;width:884px;height:1px;background:#8ec7e6"></div>
<div class="t" style="left:1029px;width:200px;text-align:center;top:814.1px;font-size:12.5px;color:#555">Ningún resultado</div>
<div class="abs" style="left:687px;top:831px;width:884px;height:1px;background:#e4e4e4"></div>
<div class="panel" style="left:645px;top:920px;width:968px;height:100px"><div class="ph" style="height:45px"></div></div>
<svg class="abs" style="left:656px;top:933px" width="23" height="18" viewBox="0 0 23 18"><rect x="0" y="0" width="1.6" height="17.2" fill="#6c868e"/><rect x="0" y="15.7" width="23" height="1.5" fill="#6c868e"/><rect x="4.2" y="8.7" width="2.8" height="5.9" fill="#6c868e"/><rect x="8.6" y="2.9" width="2.8" height="11.7" fill="#6c868e"/><rect x="12.8" y="5.8" width="2.8" height="8.8" fill="#6c868e"/><rect x="17.2" y="1.8" width="2.8" height="12.8" fill="#6c868e"/></svg>
<div class="t" style="left:688px;top:934.4px;font-size:16.3px;font-weight:bold;color:#363a41;">Inicio</div>
<svg class="abs" style="left:1552px;top:932px" width="16" height="16" viewBox="0 0 16 16"><circle cx="8" cy="8" r="5.6" fill="#c8c8c8"/><rect x="6.6" y="0.3" width="2.8" height="3" fill="#c8c8c8" transform="rotate(0 8 8)"/><rect x="6.6" y="0.3" width="2.8" height="3" fill="#c8c8c8" transform="rotate(45 8 8)"/><rect x="6.6" y="0.3" width="2.8" height="3" fill="#c8c8c8" transform="rotate(90 8 8)"/><rect x="6.6" y="0.3" width="2.8" height="3" fill="#c8c8c8" transform="rotate(135 8 8)"/><rect x="6.6" y="0.3" width="2.8" height="3" fill="#c8c8c8" transform="rotate(180 8 8)"/><rect x="6.6" y="0.3" width="2.8" height="3" fill="#c8c8c8" transform="rotate(225 8 8)"/><rect x="6.6" y="0.3" width="2.8" height="3" fill="#c8c8c8" transform="rotate(270 8 8)"/><rect x="6.6" y="0.3" width="2.8" height="3" fill="#c8c8c8" transform="rotate(315 8 8)"/><circle cx="8" cy="8" r="2.4" fill="#fafbfc"/></svg>
<svg class="abs" style="left:1582px;top:932px" width="16" height="16" viewBox="0 0 16 16"><path d="M1.7 6.6A6.5 6.5 0 0 1 12.4 3.4M14.3 9.2A6.5 6.5 0 0 1 3.6 12.4" fill="none" stroke="#c8c8c8" stroke-width="2.5"/><path d="M15.9 0.5V6.2H9.9ZM0.1 9.3H6L0.1 15.3Z" fill="#c8c8c8"/></svg>
<div class="panel" style="left:1623px;top:238px;width:270px;height:447px"><div class="ph" style="height:45px"></div></div>
<svg class="abs" style="left:1634px;top:252px" width="16" height="16" viewBox="0 0 16 16"><circle cx="2.5" cy="13.5" r="2.3" fill="#6c868e"/><path d="M1 7.2A7.8 7.8 0 0 1 8.8 15M1 1.8A13.2 13.2 0 0 1 14.2 15" fill="none" stroke="#6c868e" stroke-width="2.4"/></svg>
<div class="t" style="left:1654px;top:254.7px;font-size:14px;font-weight:bold;color:#363a41;">Noticias PrestaShop</div>
<div class="t" style="left:1644.5px;top:300.8px;font-size:15.6px;color:#25b9d7;">Como los eCommerce pueden</div>
<div class="t" style="left:1644.5px;top:317.0px;font-size:15.6px;color:#25b9d7;">mejorar su capital circulante</div>
<div class="t" style="left:1644.5px;top:343.2px;font-size:12.7px;color:#959595;">31/05/2022</div>
<div class="t" style="left:1644.5px;top:360.7px;font-size:12.5px;color:#555;">Uno de los aspectos mas criticos que</div>
<div class="t" style="left:1644.5px;top:377.6px;font-size:12.5px;color:#555;">pueden limitar el crecimiento e incluso</div>
<div class="t" style="left:1644.5px;top:394.5px;font-size:12.5px;color:#555;">llevar al desastre de un eCommerce son</div>
<div class="t" style="left:1644.5px;top:411.4px;font-size:12.5px;color:#555;">los ciclos de capital circulant... <span style="color:#25b9d7">Leer mas</span></div>
<div class="abs" style="left:1644px;top:443px;width:228px;height:1px;background:#e8e8e8"></div>
<div class="t" style="left:1644.5px;top:463.2px;font-size:15.6px;color:#25b9d7;">Comercio electrónico y</div>
<div class="t" style="left:1644.5px;top:479.6px;font-size:15.6px;color:#25b9d7;">metaverso: ¿qué oportunidades</div>
<div class="t" style="left:1644.5px;top:496.1px;font-size:15.6px;color:#25b9d7;">representa para las empresas?</div>
<div class="t" style="left:1644.5px;top:521.5px;font-size:12.7px;color:#959595;">20/05/2022</div>
<div class="t" style="left:1644.5px;top:539.7px;font-size:12.5px;color:#555;">La palabra esta en boca de todos, se dijo</div>
<div class="t" style="left:1644.5px;top:556.6px;font-size:12.5px;color:#555;">128 veces durante los ultimos &nbsp;NASDAQ</div>
<div class="t" style="left:1644.5px;top:573.6px;font-size:12.5px;color:#555;">Investor Days. La fiebre del metaverso</div>
<div class="t" style="left:1644.5px;top:590.5px;font-size:12.5px;color:#555;">ha invadido el planeta, todo... <span style="color:#25b9d7">Leer mas</span></div>
<div class="abs" style="left:1644px;top:622px;width:228px;height:1px;background:#e8e8e8"></div>
<div class="t" style="left:1608px;width:300px;text-align:center;top:641.4px;font-size:15.5px;color:#25b9d7">Ver más noticias</div>
<div class="panel" style="left:1623px;top:707px;width:270px;height:84px"><div class="abs" style="left:0;top:27px;width:268px;height:1px;background:#ccd3d6"></div></div>
<svg class="abs" style="left:1636px;top:716px" width="20" height="13" viewBox="0 0 20 13"><path d="M4.5 0.7L7.9 5.3H5.7V9.5H11.4L12.6 11.8H3.3V5.3H1Z" fill="#222"/><path d="M15.4 11.8L12 7.4H14V3H8.5L7.1 0.6H16.5V7.4H18.9Z" fill="#222"/></svg>
<div class="t" style="left:1659px;top:715.7px;font-size:12.6px;color:#222;letter-spacing:-0.45px">PRESTASHOP UPDATES</div>
<div class="t" style="left:1632px;top:742.9px;font-size:12.6px;color:#222;">Your PrestaShop version is up to date</div>
<div class="panel" style="left:1623px;top:813px;width:270px;height:200px"><div class="ph" style="height:44px"></div></div>
<svg class="abs" style="left:1634px;top:828px" width="15" height="15" viewBox="0 0 15 15"><circle cx="4.5" cy="4.5" r="3.2" fill="none" stroke="#363a41" stroke-width="1.7"/><circle cx="10.5" cy="10.5" r="3.2" fill="none" stroke="#363a41" stroke-width="1.7"/><path d="M6 6L9 9" stroke="#363a41" stroke-width="1.7"/></svg>
<div class="t" style="left:1651.5px;top:827.3px;font-size:15.7px;font-weight:bold;color:#363a41;">¡Estamos a tu lado!</div>
<div class="t" style="left:1644.5px;top:875.5px;font-size:12.6px;font-weight:bold;color:#25b9d7;">Centro de ayuda</div>
<div class="t" style="left:1644.5px;top:892.5px;font-size:12.6px;color:#555;">Documentacion, soporte, expertos</div>
<div class="t" style="left:1644.5px;top:909.7px;font-size:12.6px;color:#555;">profesionales, formacion... PrestaShop y</div>
<div class="t" style="left:1644.5px;top:926.9px;font-size:12.6px;color:#555;">toda su comunidad estan aqui para</div>
<div class="t" style="left:1644.5px;top:944.1px;font-size:12.6px;color:#555;">guiarte</div>
<div class="abs" style="left:1903px;top:0;width:1px;height:954px;background:#d2d2d2"></div>
</body></html>
